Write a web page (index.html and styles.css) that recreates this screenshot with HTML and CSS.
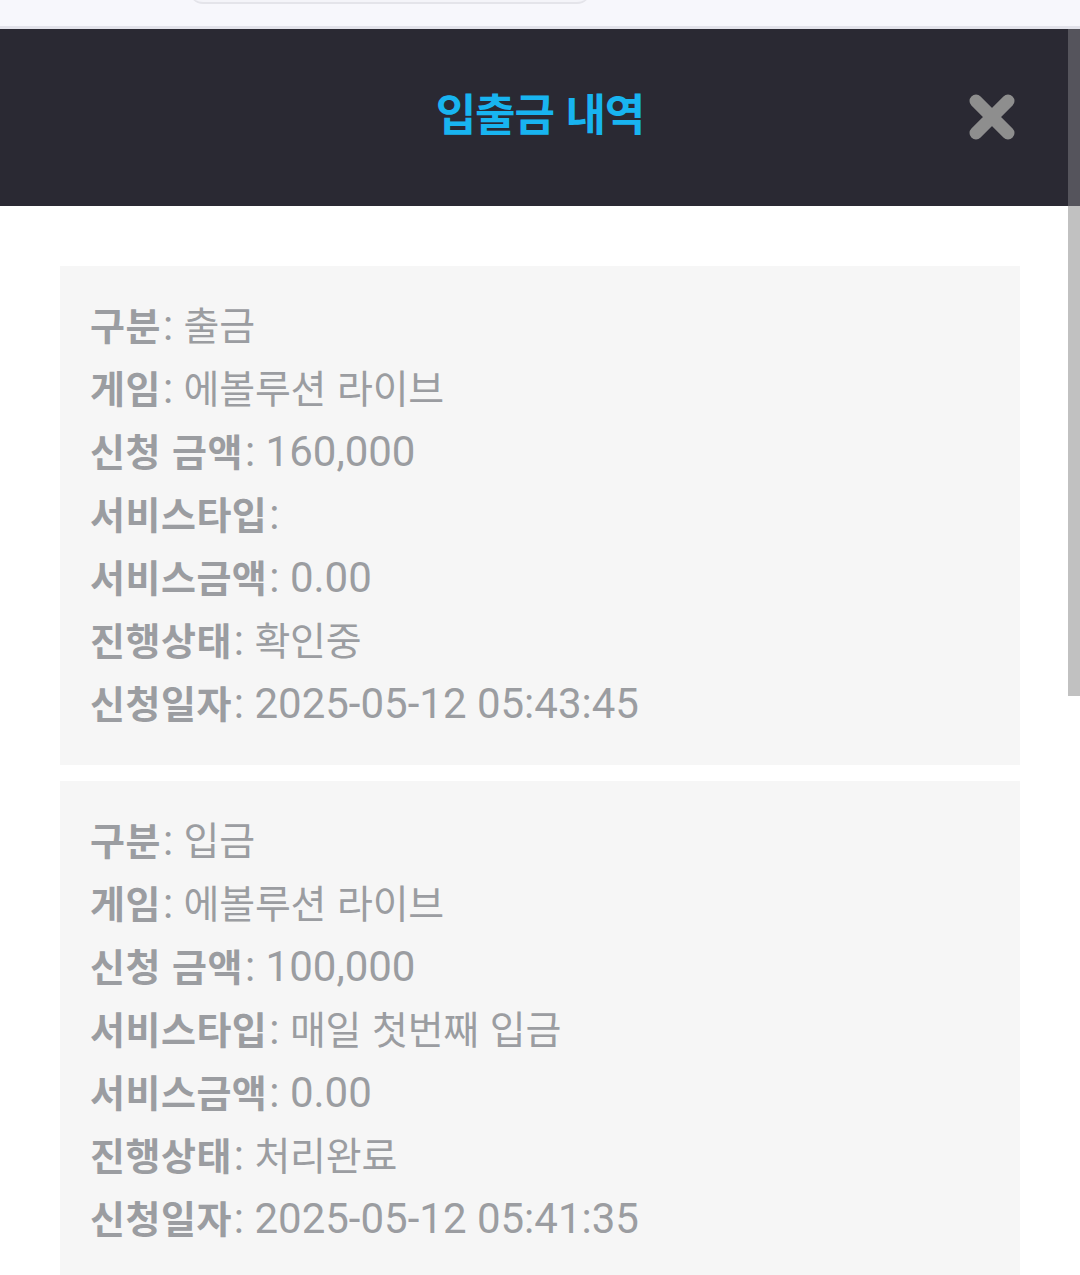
FILE: index.html
```html
<!DOCTYPE html>
<html lang="ko">
<head>
<meta charset="utf-8">
<title>입출금 내역</title>
<link rel="stylesheet" href="styles.css">
</head>
<body>
<div class="topbar"><div class="urlpill"></div></div>
<header class="header">
  <h1 class="title">입출금 내역</h1>
  <button class="close" aria-label="닫기">
    <svg viewBox="0 0 50 50" width="50" height="50"><path d="M9 9 L41 41 M41 9 L9 41" stroke="#8e8e8e" stroke-width="13" stroke-linecap="round"/></svg>
  </button>
</header>
<main class="list">
  <section class="card">
    <p class="row"><b>구분</b>: <span class="ko">출금</span></p>
    <p class="row"><b>게임</b>: <span class="ko">에볼루션 라이브</span></p>
    <p class="row"><b>신청 금액</b>: 160,000</p>
    <p class="row"><b>서비스타입</b>: </p>
    <p class="row"><b>서비스금액</b>: 0.00</p>
    <p class="row"><b>진행상태</b>: <span class="ko">확인중</span></p>
    <p class="row"><b>신청일자</b>: 2025-05-12 05:43:45</p>
  </section>
  <section class="card">
    <p class="row"><b>구분</b>: <span class="ko">입금</span></p>
    <p class="row"><b>게임</b>: <span class="ko">에볼루션 라이브</span></p>
    <p class="row"><b>신청 금액</b>: 100,000</p>
    <p class="row"><b>서비스타입</b>: <span class="ko">매일 첫번째 입금</span></p>
    <p class="row"><b>서비스금액</b>: 0.00</p>
    <p class="row"><b>진행상태</b>: <span class="ko">처리완료</span></p>
    <p class="row"><b>신청일자</b>: 2025-05-12 05:41:35</p>
  </section>
</main>
<div class="scrollbar"><div class="thumb-top"></div><div class="thumb"></div></div>
</body>
</html>
```
FILE: styles.css
```css
html, body {
  margin: 0;
  padding: 0;
  background: #ffffff;
  overflow: hidden;
}
body {
  font-family: Roboto, "Noto Sans CJK KR", sans-serif;
  width: 1080px;
  height: 1275px;
}
.topbar {
  height: 26px;
  background: #f7f7fc;
  border-bottom: 3px solid #e2e2ea;
  position: relative;
}
.urlpill {
  position: absolute;
  left: 189px;
  top: -20px;
  width: 402px;
  height: 22px;
  border-radius: 0 0 14px 14px;
  border-bottom: 2px solid #e4e4ea;
  background: #f4f4f9;
}
.header {
  height: 177px;
  background: #2a2933;
  display: flex;
  align-items: center;
  justify-content: center;
  position: relative;
}
.title {
  margin: 0;
  color: #18b4f0;
  font-family: "Noto Sans CJK KR", sans-serif;
  font-weight: 700;
  font-size: 44px;
  letter-spacing: -1px;
  line-height: 1;
  margin-top: -12px;
}
.close {
  position: absolute;
  right: 63px;
  top: 63px;
  width: 50px;
  height: 50px;
  padding: 0;
  border: 0;
  background: none;
}
.close svg { display: block; }
.list {
  padding: 60px 60px 0;
  display: flex;
  flex-direction: column;
  gap: 16px;
}
.card {
  background: #f6f6f6;
  padding: 28px 30px 30px;
}
.row {
  margin: 0;
  height: 63px;
  font-size: 42px;
  line-height: 63px;
  color: #9b9da1;
  white-space: nowrap;
}
.row b {
  font-family: "Noto Sans CJK KR", sans-serif;
  font-weight: 700;
  font-size: 38px;
  line-height: 1;
  letter-spacing: 0.5px;
  margin-right: 2px;
}
.row .ko {
  font-family: "Noto Sans CJK KR", sans-serif;
  font-size: 39px;
  line-height: 1;
  letter-spacing: -0.2px;
}
.scrollbar {
  position: fixed;
  right: 0;
  top: 29px;
  width: 12px;
}
.thumb-top {
  height: 177px;
  background: #55545c;
}
.thumb {
  height: 490px;
  background: #c1c1c1;
}
```
